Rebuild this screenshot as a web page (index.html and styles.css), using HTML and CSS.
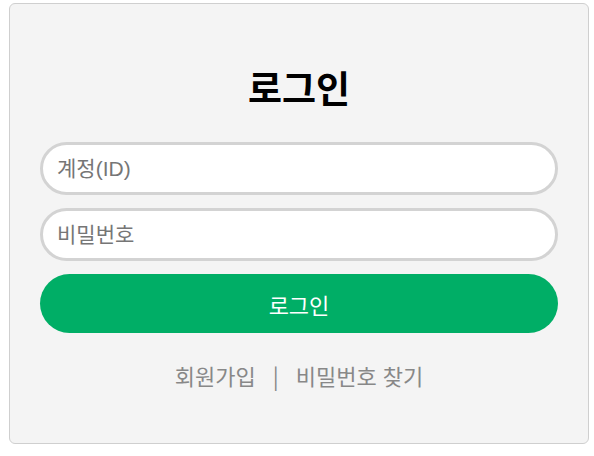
FILE: index.html
```html
<!DOCTYPE html>
<html lang="ko">
<head>
<meta charset="utf-8">
<link rel="stylesheet" href="styles.css">
</head>
<body>
<div class="card">
  <h1 class="title">로그인</h1>
  <form class="form">
    <input class="field" type="text" placeholder="계정(ID)">
    <input class="field" type="password" placeholder="비밀번호">
    <button class="submit" type="button">로그인</button>
  </form>
  <div class="links">
    <a class="link" href="#">회원가입</a>
    <span class="sep">|</span>
    <a class="link" href="#">비밀번호 찾기</a>
  </div>
</div>
</body>
</html>
```

FILE: styles.css
```css
html, body {
  margin: 0;
  padding: 0;
  background: #fff;
}
body {
  padding: 3px 0 0 9px;
  font-family: "Noto Sans CJK KR", "Noto Sans", sans-serif;
}
.card {
  box-sizing: border-box;
  width: 580px;
  height: 441px;
  background: #f4f4f4;
  border: 1px solid #cfcfcf;
  border-radius: 6px;
  padding: 58px 30px 0;
}
.title {
  margin: 0;
  text-align: center;
  font-size: 37px;
  font-weight: 700;
  line-height: 50px;
  color: #000;
}
.form {
  margin-top: 30px;
  display: flex;
  flex-direction: column;
  gap: 13px;
}
.field {
  box-sizing: border-box;
  width: 518px;
  height: 53px;
  margin: 0;
  border: 3px solid #d3d3d3;
  border-radius: 27px;
  background: #fff;
  padding: 0 14px;
  font-family: "Liberation Sans", "Noto Sans CJK KR", sans-serif;
  font-size: 21px;
  color: #333;
  outline: none;
}
.field::placeholder {
  color: #767676;
}
.submit {
  box-sizing: border-box;
  width: 518px;
  height: 59px;
  margin-top: 0;
  border: none;
  border-radius: 30px;
  background: #00ae66;
  color: #fff;
  font-family: "Noto Sans CJK KR", sans-serif;
  font-size: 22px;
}
.links {
  margin-top: 26px;
  display: flex;
  justify-content: center;
  gap: 17px;
  font-size: 22px;
  color: #888;
  line-height: 32px;
}
.link {
  color: #888;
  text-decoration: none;
}
.sep {
  color: #888;
}
```
